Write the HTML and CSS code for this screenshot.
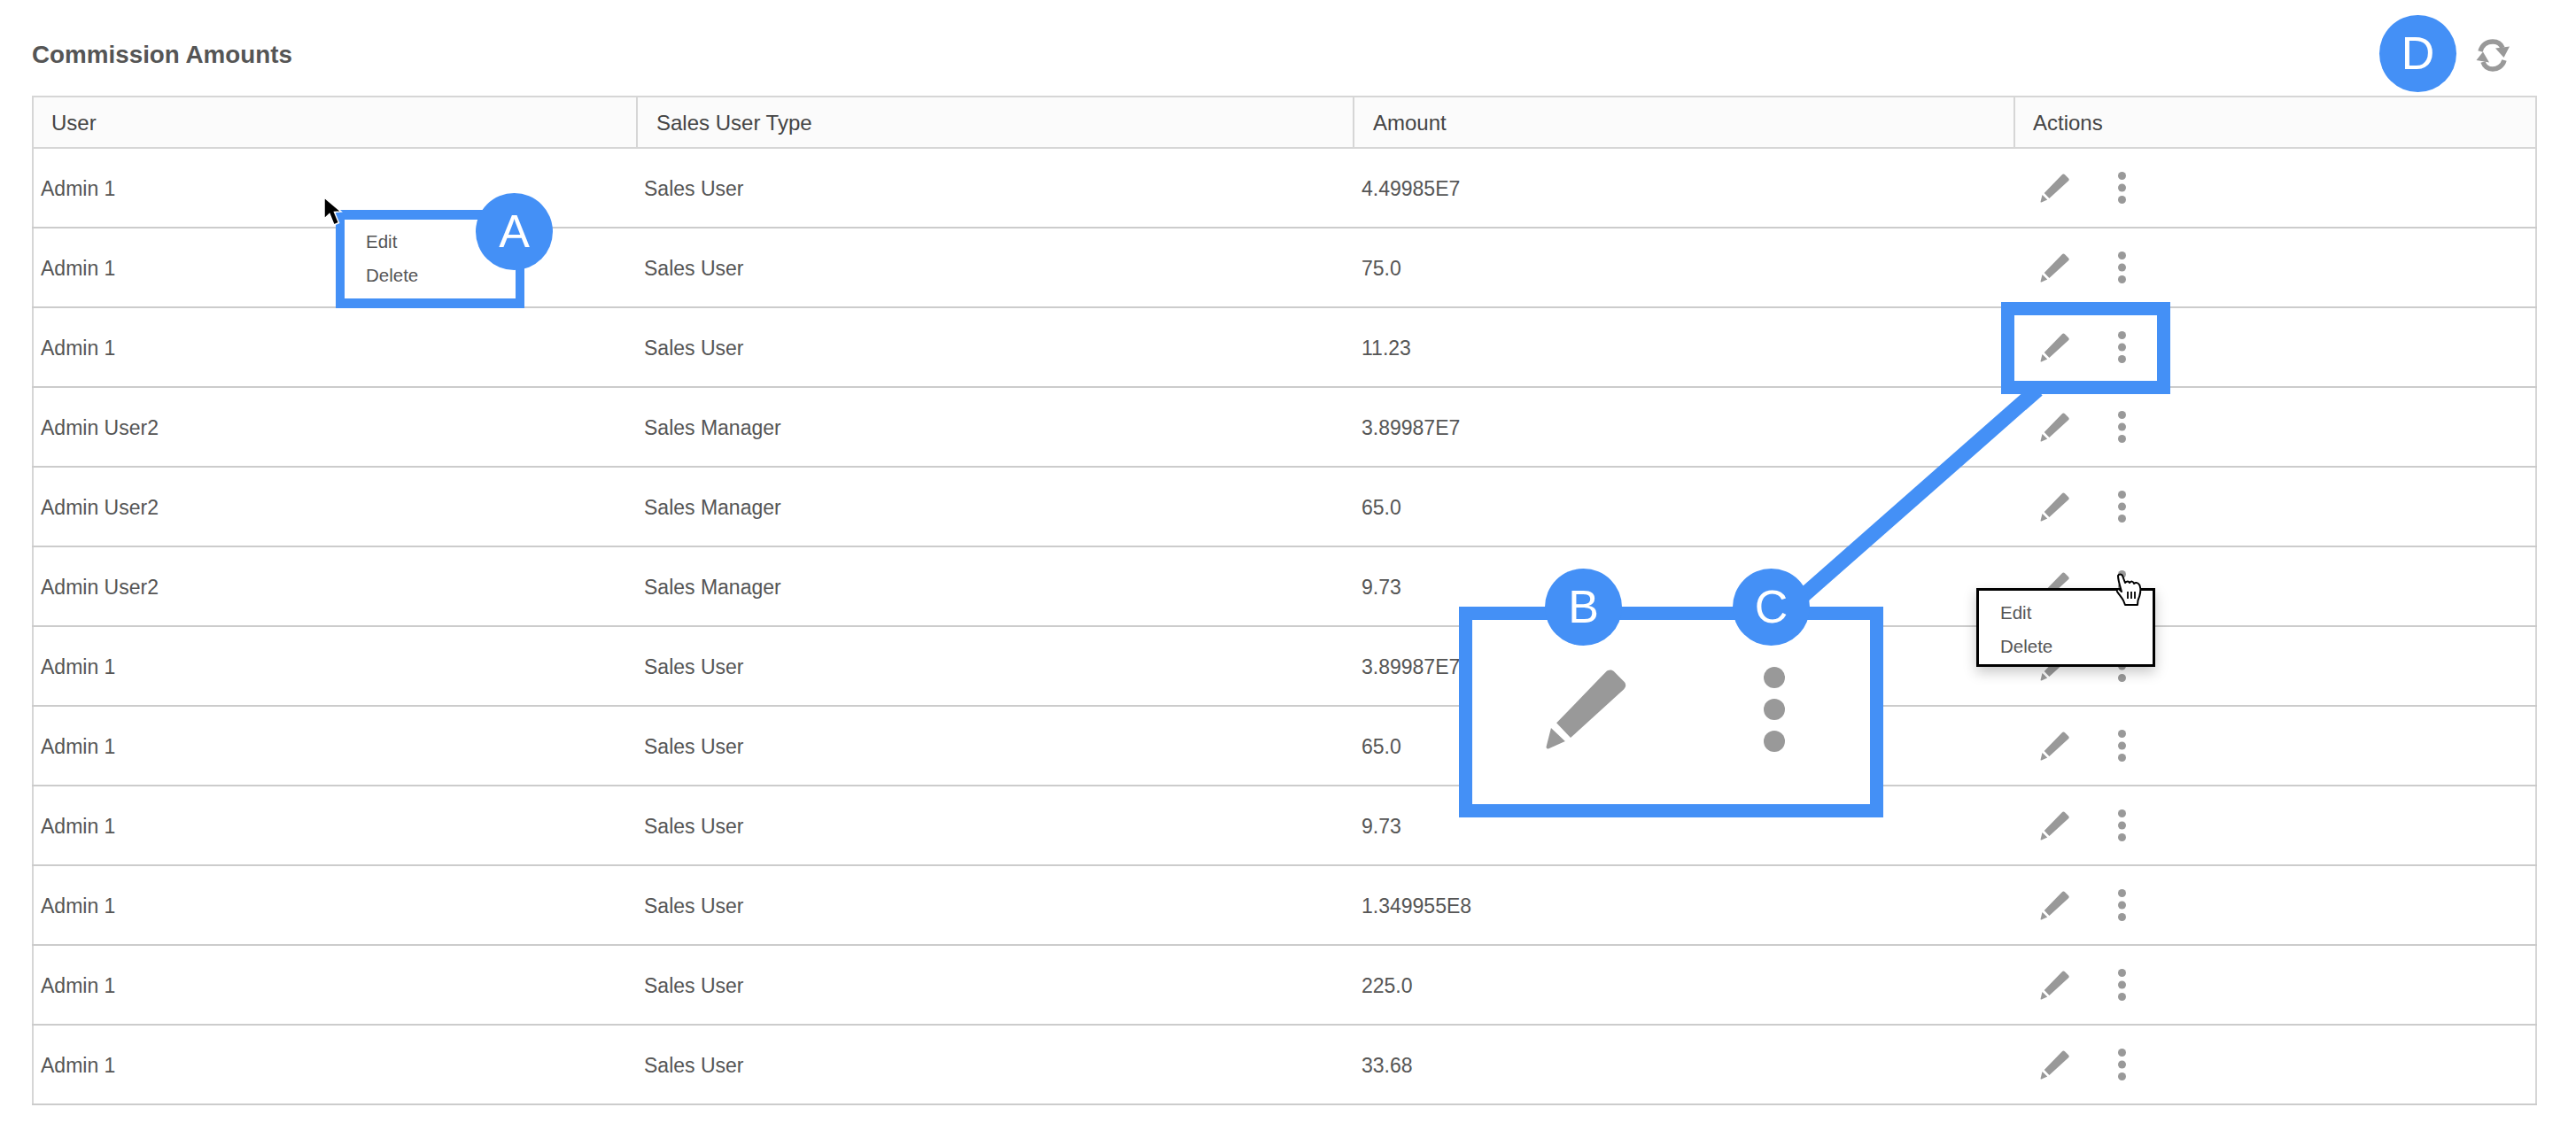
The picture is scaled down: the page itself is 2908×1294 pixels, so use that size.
FILE: index.html
```html
<!DOCTYPE html>
<html lang="en">
<head>
    <meta charset="UTF-8">
    <title>Commission Amounts</title>
    <link rel="stylesheet" href="styles.css">
</head>
<body>
    <svg class="icon-defs" width="0" height="0">
        <symbol id="icon-pencil" viewBox="0 0 33 33">
            <path d="M24.6 1.4 C25.6 0.4 27 0.2 28 1.2 L32 5.2 C33 6.2 32.9 7.4 32 8.3 L10.4 28 L4.7 22 Z"/>
            <path d="M2.5 24 L8.2 29.4 L1.6 32.4 C0.9 32.7 0.4 32.2 0.6 31.5 Z"/>
        </symbol>
        <symbol id="icon-dots" viewBox="0 0 9 36">
            <circle cx="4.5" cy="4.5" r="4.5"/>
            <circle cx="4.5" cy="18" r="4.5"/>
            <circle cx="4.5" cy="31.5" r="4.5"/>
        </symbol>
    </svg>

    <div class="page">
        <header class="page-head">
            <h1>Commission Amounts</h1>
            <svg class="refresh" viewBox="0 0 48 48" width="48" height="48">
                <path class="refresh-arc" d="M10 20 C12 12 18 9 24 9 C29 9 33 11 35 16"/>
                <path class="refresh-arc" d="M37 30 C35 37 29 40 24 40 C19 40 15 38 13 32"/>
                <path d="M27 16.500 L43 14.500 L36.500 27 Z"/>
                <path d="M5.500 30 L20 32.500 L13 20.500 Z"/>
            </svg>
        </header>

        <table class="grid">
            <colgroup>
                <col class="col-user">
                <col class="col-type">
                <col class="col-amount">
                <col class="col-actions">
            </colgroup>
            <thead>
                <tr>
                    <th>User</th>
                    <th>Sales User Type</th>
                    <th>Amount</th>
                    <th>Actions</th>
                </tr>
            </thead>
            <tbody>
                <tr>
                    <td>Admin 1</td>
                    <td>Sales User</td>
                    <td>4.49985E7</td>
                    <td><div class="actions"><svg class="pencil"><use href="#icon-pencil"/></svg><svg class="dots"><use href="#icon-dots"/></svg></div></td>
                </tr>
                <tr>
                    <td>Admin 1</td>
                    <td>Sales User</td>
                    <td>75.0</td>
                    <td><div class="actions"><svg class="pencil"><use href="#icon-pencil"/></svg><svg class="dots"><use href="#icon-dots"/></svg></div></td>
                </tr>
                <tr>
                    <td>Admin 1</td>
                    <td>Sales User</td>
                    <td>11.23</td>
                    <td><div class="actions"><svg class="pencil"><use href="#icon-pencil"/></svg><svg class="dots"><use href="#icon-dots"/></svg></div></td>
                </tr>
                <tr>
                    <td>Admin User2</td>
                    <td>Sales Manager</td>
                    <td>3.89987E7</td>
                    <td><div class="actions"><svg class="pencil"><use href="#icon-pencil"/></svg><svg class="dots"><use href="#icon-dots"/></svg></div></td>
                </tr>
                <tr>
                    <td>Admin User2</td>
                    <td>Sales Manager</td>
                    <td>65.0</td>
                    <td><div class="actions"><svg class="pencil"><use href="#icon-pencil"/></svg><svg class="dots"><use href="#icon-dots"/></svg></div></td>
                </tr>
                <tr>
                    <td>Admin User2</td>
                    <td>Sales Manager</td>
                    <td>9.73</td>
                    <td><div class="actions"><svg class="pencil"><use href="#icon-pencil"/></svg><svg class="dots"><use href="#icon-dots"/></svg></div></td>
                </tr>
                <tr>
                    <td>Admin 1</td>
                    <td>Sales User</td>
                    <td>3.89987E7</td>
                    <td><div class="actions"><svg class="pencil"><use href="#icon-pencil"/></svg><svg class="dots"><use href="#icon-dots"/></svg></div></td>
                </tr>
                <tr>
                    <td>Admin 1</td>
                    <td>Sales User</td>
                    <td>65.0</td>
                    <td><div class="actions"><svg class="pencil"><use href="#icon-pencil"/></svg><svg class="dots"><use href="#icon-dots"/></svg></div></td>
                </tr>
                <tr>
                    <td>Admin 1</td>
                    <td>Sales User</td>
                    <td>9.73</td>
                    <td><div class="actions"><svg class="pencil"><use href="#icon-pencil"/></svg><svg class="dots"><use href="#icon-dots"/></svg></div></td>
                </tr>
                <tr>
                    <td>Admin 1</td>
                    <td>Sales User</td>
                    <td>1.349955E8</td>
                    <td><div class="actions"><svg class="pencil"><use href="#icon-pencil"/></svg><svg class="dots"><use href="#icon-dots"/></svg></div></td>
                </tr>
                <tr>
                    <td>Admin 1</td>
                    <td>Sales User</td>
                    <td>225.0</td>
                    <td><div class="actions"><svg class="pencil"><use href="#icon-pencil"/></svg><svg class="dots"><use href="#icon-dots"/></svg></div></td>
                </tr>
                <tr>
                    <td>Admin 1</td>
                    <td>Sales User</td>
                    <td>33.68</td>
                    <td><div class="actions"><svg class="pencil"><use href="#icon-pencil"/></svg><svg class="dots"><use href="#icon-dots"/></svg></div></td>
                </tr>
            </tbody>
        </table>

        <!-- annotations drawn over the table -->
        <svg class="connector" viewBox="0 0 2908 1294">
            <line x1="2300" y1="440" x2="2026" y2="681"/>
        </svg>

        <div class="callout callout-a">
            <span>Edit</span>
            <span>Delete</span>
        </div>

        <div class="callout callout-row"></div>

        <div class="callout callout-zoom">
            <svg class="pencil-big"><use href="#icon-pencil"/></svg>
            <svg class="dots-big"><use href="#icon-dots"/></svg>
        </div>

        <div class="popup">
            <span>Edit</span>
            <span>Delete</span>
        </div>

        <span class="badge badge-a">A</span>
        <span class="badge badge-b">B</span>
        <span class="badge badge-c">C</span>
        <span class="badge badge-d">D</span>

        <svg class="cursor-arrow" viewBox="0 0 26 38" width="26" height="38">
            <path d="M2 2 L2 26 L8 20.500 L13 33 L18.500 30.500 L13.500 18.500 L21 18 Z"/>
        </svg>

        <svg class="cursor-hand" viewBox="0 0 32 40" width="32" height="40">
            <path class="hand-shape" d="M4 3 C5 1 8 1 9 3 L12 11 C14 9 16 9 17 11 C19 9 21 9 22 12 C24 10 27 11 28.500 14 C30 18 29 25 26.500 31 L26 36 L12 36 L10 31 C8 27 5 24 3 21 C2 19 4 17 6 19 L8 21 C6 14 4 8 4 3 Z"/>
            <path class="hand-lines" d="M15 21 L15 29 M19 21 L19 29 M23 21 L23 29"/>
        </svg>
    </div>
</body>
</html>
```

FILE: styles.css
```css
body {
    margin: 0;
    background-color: #ffffff;
    color: #555555;
    font-family: "Liberation Sans", Arial, sans-serif;
    font-size: 23px;
}

.icon-defs {
    position: absolute;
}

.page {
    position: relative;
    width: 2908px;
    height: 1294px;
    overflow: hidden;
}

.page-head {
    display: flex;
    justify-content: space-between;
    align-items: center;
    box-sizing: border-box;
    height: 108px;
    padding: 16px 70px 0 36px;
}

.page-head h1 {
    margin: 0;
    font-size: 27.8px;
    font-weight: bold;
}

.refresh {
    fill: #999999;
}

.refresh-arc {
    fill: none;
    stroke: #999999;
    stroke-width: 5.5;
}

.grid {
    width: 2828px;
    margin-left: 36px;
    border-collapse: collapse;
    table-layout: fixed;
    border-left: 2px solid #d6d6d6;
    border-right: 2px solid #d6d6d6;
}

.col-user {
    width: 682px;
}

.col-type {
    width: 809px;
}

.col-amount {
    width: 746px;
}

.grid th {
    height: 55px;
    padding: 1px 0 0 21px;
    background-color: #fbfbfb;
    border-top: 2px solid #d6d6d6;
    border-bottom: 2px solid #d6d6d6;
    border-left: 2px solid #d6d6d6;
    color: #444444;
    font-size: 24px;
    font-weight: normal;
    text-align: left;
}

.grid th:first-child {
    padding-left: 20px;
}

.grid th:last-child {
    padding-left: 20px;
}

.grid td {
    height: 86px;
    padding: 2px 0 0 8px;
    border-bottom: 2px solid #cccccc;
}

.grid td:nth-child(3) {
    padding-left: 9px;
}

.grid td:last-child {
    height: 88px;
    padding-top: 0;
}

.actions {
    display: flex;
    align-items: center;
    gap: 55px;
    padding-left: 21px;
}

.pencil {
    width: 33px;
    height: 33px;
    fill: #999999;
}

.dots {
    width: 9px;
    height: 36px;
    fill: #999999;
}

.connector {
    position: absolute;
    top: 0;
    left: 0;
    width: 2908px;
    height: 1294px;
}

.connector line {
    stroke: #4490f6;
    stroke-width: 17;
}

.callout {
    position: absolute;
    box-sizing: border-box;
    border: 15px solid #4490f6;
}

.callout-a {
    top: 237px;
    left: 379px;
    width: 213px;
    height: 111px;
    padding: 0 0 3px 24px;
    border-width: 11px 10px;
    background-color: #ffffff;
    display: flex;
    flex-direction: column;
    justify-content: center;
    gap: 15px;
    font-size: 20.5px;
    line-height: 23px;
}

.callout-row {
    top: 341px;
    left: 2259px;
    width: 191px;
    height: 104px;
}

.callout-zoom {
    top: 685px;
    left: 1647px;
    width: 479px;
    height: 238px;
    background-color: #ffffff;
}

.pencil-big {
    position: absolute;
    top: 55px;
    left: 82px;
    width: 92px;
    height: 92px;
    fill: #999999;
}

.dots-big {
    position: absolute;
    top: 52px;
    left: 329px;
    width: 24px;
    height: 98px;
    fill: #999999;
}

.popup {
    position: absolute;
    top: 664px;
    left: 2231px;
    box-sizing: border-box;
    width: 202px;
    height: 89px;
    padding: 3px 0 0 24px;
    display: flex;
    flex-direction: column;
    justify-content: center;
    gap: 15px;
    background-color: #ffffff;
    border: 3px solid #000000;
    box-shadow: 0 6px 14px rgba(0, 0, 0, 0.22);
    font-size: 20.5px;
    line-height: 23px;
}

.badge {
    position: absolute;
    width: 87px;
    height: 87px;
    border-radius: 50%;
    background-color: #4490f6;
    color: #ffffff;
    font-size: 52px;
    line-height: 87px;
    text-align: center;
}

.badge-a {
    top: 218px;
    left: 537px;
}

.badge-b {
    top: 642px;
    left: 1744px;
}

.badge-c {
    top: 642px;
    left: 1956px;
}

.badge-d {
    top: 17px;
    left: 2686px;
}

.cursor-arrow {
    position: absolute;
    top: 221px;
    left: 364px;
}

.cursor-arrow path {
    fill: #000000;
    stroke: #ffffff;
    stroke-width: 1.5;
}

.cursor-hand {
    position: absolute;
    top: 647px;
    left: 2387px;
}

.hand-shape {
    fill: #ffffff;
    stroke: #000000;
    stroke-width: 2;
    stroke-linejoin: round;
}

.hand-lines {
    fill: none;
    stroke: #000000;
    stroke-width: 1.8;
}
```
